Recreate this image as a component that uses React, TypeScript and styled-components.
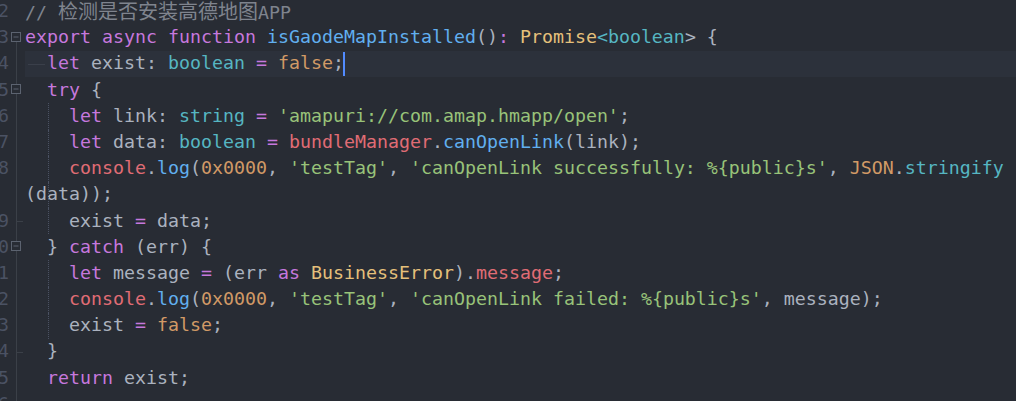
import React from "react";
import styled, { createGlobalStyle } from "styled-components";

const palette = {
  plain: "#abb2bf",
  kw: "#c678dd",
  fn: "#61afef",
  ty: "#56b6c2",
  cls: "#e5c07b",
  num: "#d19a66",
  str: "#98c379",
  red: "#e06c75",
  cm: "#7f848e",
};

type Kind = keyof typeof palette | "cjk" | "cursor" | "tab";
type Tok = [Kind, string];
type FoldKind = "none" | "open" | "box" | "line" | "end";

type LineDef = {
  n?: number;
  fold: FoldKind;
  guide?: boolean;
  current?: boolean;
  toks: Tok[];
};

const GlobalStyle = createGlobalStyle`
  html, body {
    margin: 0;
    padding: 0;
    background: #282c34;
    overflow: hidden;
  }
`;

const Editor = styled.div`
  width: 1016px;
  height: 401px;
  overflow: hidden;
  background: #282c34;
  font-family: "DejaVu Sans Mono", "Noto Sans CJK SC", monospace;
  font-size: 18.27px;
`;

const Lines = styled.div`
  margin-top: -1.4px;
  display: flex;
  flex-direction: column;
`;

const Row = styled.div`
  display: flex;
  height: 26.2px;
`;

const LineNo = styled.div`
  width: 9px;
  flex: none;
  overflow: hidden;
  display: flex;
  justify-content: flex-end;
  color: #4b5263;
  line-height: 21.8px;
  padding-top: 1.4px;
  white-space: pre;
`;

const Fold = styled.div<{ $kind: FoldKind }>`
  width: 16px;
  flex: none;
  position: relative;
  display: flex;
  align-items: center;

  &::before {
    content: "";
    display: ${(p) => (p.$kind === "none" ? "none" : "block")};
    position: absolute;
    left: 7px;
    width: 1px;
    top: ${(p) => (p.$kind === "open" ? "50%" : "0")};
    bottom: 0;
    background: #3b4048;
  }

  &::after {
    content: "";
    display: ${(p) => (p.$kind === "end" ? "block" : "none")};
    position: absolute;
    left: 7px;
    top: 50%;
    width: 7px;
    height: 1px;
    background: #3b4048;
  }
`;

const FoldBox = styled.svg`
  position: relative;
  z-index: 1;
  margin-left: 2px;
  margin-top: -2px;
`;

const Code = styled.div<{ $guide?: boolean; $current?: boolean }>`
  flex: 1;
  position: relative;
  box-sizing: border-box;
  height: 26.2px;
  line-height: 21.8px;
  padding-top: 1.4px;
  padding-bottom: 3px;
  white-space: pre;
  color: ${palette.plain};
  background: ${(p) => (p.$current ? "#2c313b" : "transparent")};

  &::before {
    content: "";
    display: ${(p) => (p.$guide ? "block" : "none")};
    position: absolute;
    left: 23px;
    top: 0;
    bottom: 0;
    border-left: 1px dotted #4b5263;
  }
`;

const Span = styled.span<{ $kind: keyof typeof palette }>`
  color: ${(p) => palette[p.$kind]};
`;

const Cjk = styled.span`
  color: ${palette.cm};
  font-family: "Noto Sans CJK SC", sans-serif;
  font-size: 20px;
  letter-spacing: 0;
`;

const Cursor = styled.span`
  display: inline-block;
  width: 2px;
  height: 24px;
  margin-top: -0.4px;
  margin-left: -1px;
  vertical-align: top;
  background: #528bff;
`;

const TabMark = styled.span`
  display: inline-block;
  width: 17px;
  height: 1px;
  margin: 0 2px 0 3px;
  vertical-align: middle;
  background: #3a3f4a;
`;

const lines: LineDef[] = [
  { n: 2, fold: "none", toks: [["cm", "// "], ["cjk", "检测是否安装高德地图"], ["cm", "APP"]] },
  {
    n: 3,
    fold: "open",
    toks: [
      ["kw", "export"], ["plain", " "], ["kw", "async"], ["plain", " "], ["kw", "function"], ["plain", " "],
      ["fn", "isGaodeMapInstalled"], ["plain", "()"], ["kw", ":"], ["plain", " "], ["cls", "Promise"],
      ["ty", "<boolean"], ["plain", "> {"],
    ],
  },
  {
    n: 4,
    fold: "line",
    current: true,
    toks: [
      ["tab", ""], ["kw", "let"], ["plain", " exist: "], ["ty", "boolean"], ["plain", " "], ["kw", "="],
      ["plain", " "], ["num", "false"], ["plain", ";"], ["cursor", ""],
    ],
  },
  { n: 5, fold: "box", toks: [["plain", "  "], ["kw", "try"], ["plain", " {"]] },
  {
    n: 6,
    fold: "line",
    guide: true,
    toks: [
      ["plain", "    "], ["kw", "let"], ["plain", " link: "], ["ty", "string"], ["plain", " "], ["kw", "="],
      ["plain", " "], ["str", "'amapuri://com.amap.hmapp/open'"], ["plain", ";"],
    ],
  },
  {
    n: 7,
    fold: "line",
    guide: true,
    toks: [
      ["plain", "    "], ["kw", "let"], ["plain", " data: "], ["ty", "boolean"], ["plain", " "], ["kw", "="],
      ["plain", " "], ["red", "bundleManager"], ["plain", "."], ["fn", "canOpenLink"], ["plain", "(link);"],
    ],
  },
  {
    n: 8,
    fold: "line",
    guide: true,
    toks: [
      ["plain", "    "], ["red", "console"], ["plain", "."], ["fn", "log"], ["plain", "("], ["num", "0x0000"],
      ["plain", ", "], ["str", "'testTag'"], ["plain", ", "], ["str", "'canOpenLink successfully: %{public}s'"],
      ["plain", ", "], ["num", "JSON"], ["plain", "."], ["ty", "stringify"],
    ],
  },
  { fold: "line", guide: true, toks: [["plain", "(data));"]] },
  {
    n: 9,
    fold: "end",
    guide: true,
    toks: [["plain", "    exist "], ["kw", "="], ["plain", " data;"]],
  },
  {
    n: 10,
    fold: "box",
    toks: [["plain", "  } "], ["kw", "catch"], ["plain", " (err) {"]],
  },
  {
    n: 11,
    fold: "line",
    guide: true,
    toks: [
      ["plain", "    "], ["kw", "let"], ["plain", " message "], ["kw", "="], ["plain", " (err "], ["kw", "as"],
      ["plain", " "], ["cls", "BusinessError"], ["plain", ")."], ["red", "message"], ["plain", ";"],
    ],
  },
  {
    n: 12,
    fold: "line",
    guide: true,
    toks: [
      ["plain", "    "], ["red", "console"], ["plain", "."], ["fn", "log"], ["plain", "("], ["num", "0x0000"],
      ["plain", ", "], ["str", "'testTag'"], ["plain", ", "], ["str", "'canOpenLink failed: %{public}s'"],
      ["plain", ", message);"],
    ],
  },
  {
    n: 13,
    fold: "line",
    guide: true,
    toks: [["plain", "    exist "], ["kw", "="], ["plain", " "], ["num", "false"], ["plain", ";"]],
  },
  { n: 14, fold: "end", toks: [["plain", "  }"]] },
  { n: 15, fold: "line", toks: [["plain", "  "], ["kw", "return"], ["plain", " exist;"]] },
  { n: 16, fold: "line", toks: [] },
];

const FoldIcon = () => (
  <FoldBox width="10" height="10" viewBox="0 0 10 10">
    <rect x="0.5" y="0.5" width="9" height="9" fill="#282c34" stroke="#5c6370" />
    <line x1="2.5" y1="5" x2="7.5" y2="5" stroke="#5c6370" />
  </FoldBox>
);

const renderTok = ([kind, text]: Tok, i: number) => {
  if (kind === "cjk") return <Cjk key={i}>{text}</Cjk>;
  if (kind === "cursor") return <Cursor key={i} />;
  if (kind === "tab") return <TabMark key={i} />;
  return (
    <Span key={i} $kind={kind}>
      {text}
    </Span>
  );
};

export default function App() {
  return (
    <>
      <GlobalStyle />
      <Editor>
        <Lines>
          {lines.map((line, idx) => (
            <Row key={idx}>
              <LineNo>{line.n ?? ""}</LineNo>
              <Fold $kind={line.fold}>
                {(line.fold === "open" || line.fold === "box") && <FoldIcon />}
              </Fold>
              <Code $guide={line.guide} $current={line.current}>
                {line.toks.map(renderTok)}
              </Code>
            </Row>
          ))}
        </Lines>
      </Editor>
    </>
  );
}
